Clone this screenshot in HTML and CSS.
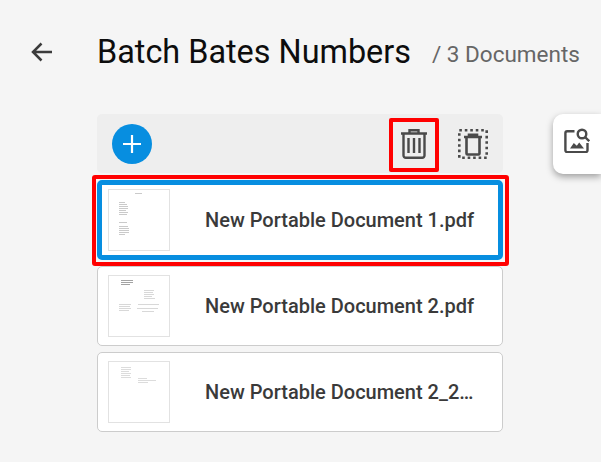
FILE: index.html
```html
<!DOCTYPE html>
<html lang="en">
<head>
<meta charset="utf-8">
<title>Batch Bates Numbers</title>
<link rel="stylesheet" href="styles.css">
</head>
<body>
<header class="header">
  <svg class="back" viewBox="0 0 22 20" width="22" height="20"><path d="M21 10H2M10.500 1.500 2 10l8.500 8.500" fill="none" stroke="#3c3c3c" stroke-width="2.500"/></svg>
  <h1 class="title">Batch Bates Numbers</h1>
  <span class="count">/ 3 Documents</span>
</header>
<main class="main">
  <section class="panel">
    <div class="toolbar">
      <button class="add" type="button" aria-label="Add">
        <svg viewBox="0 0 18 18" width="18" height="18"><path d="M9 0v18M0 9h18" stroke="#fff" stroke-width="2.200"/></svg>
      </button>
      <div class="tools">
        <div class="tool tool-marked">
          <svg viewBox="0 0 26 30" width="26" height="30" fill="none" stroke="#4a4a4a" stroke-width="2.400"><path d="M0 4.500h26M8.500 4.500V1.200h9v3.300"/><path d="M2.500 5v21.500a2.300 2.300 0 0 0 2.300 2.300h16.400a2.300 2.300 0 0 0 2.300-2.300V5"/><path d="M7.500 9v15M13 9v15M18.500 9v15"/></svg>
        </div>
        <div class="tool">
          <svg viewBox="0 0 30 30" width="30" height="30" fill="none" stroke="#4a4a4a"><rect x="1.300" y="1.300" width="27.400" height="27.400" stroke-width="2.600" stroke-dasharray="2.600 2.880"/><path stroke-width="2.600" d="M6 8h18M11 7.500V5.800h8v1.700M8.500 8v16.500a1 1 0 0 0 1 1h11a1 1 0 0 0 1-1V8"/></svg>
        </div>
      </div>
    </div>
    <ul class="docs">
      <li class="doc doc-active">
        <svg class="thumb" viewBox="0 0 60 60"><g fill="#b4b4b4"><rect x="26" y="3" width="7" height=".7"/><rect x="10" y="12" width="6" height=".7"/><rect x="10" y="14" width="8" height=".7"/><rect x="10" y="16" width="9" height=".7"/><rect x="10" y="18" width="9" height=".7"/><rect x="10" y="20" width="7" height=".7"/><rect x="10" y="22" width="9" height=".7"/><rect x="10" y="24" width="8" height=".7"/><rect x="10" y="32" width="8" height=".7"/><rect x="10" y="36" width="9" height=".7"/><rect x="10" y="38" width="10" height=".7"/><rect x="10" y="40" width="10" height=".7"/><rect x="10" y="42" width="10" height=".7"/><rect x="10" y="44" width="6" height=".7"/></g></svg>
        <span class="name">New Portable Document 1.pdf</span>
      </li>
      <li class="doc">
        <svg class="thumb" viewBox="0 0 60 60"><g fill="#8c8c8c"><rect x="12" y="4" width="12" height=".8"/><rect x="12" y="6" width="12" height=".8"/><rect x="12" y="8" width="9" height=".8"/></g><g fill="#c8c8c8"><rect x="35" y="14" width="10" height=".7"/><rect x="35" y="16" width="9" height=".7"/><rect x="35" y="18" width="10" height=".7"/><rect x="35" y="20" width="8" height=".7"/><rect x="35" y="22" width="11" height=".7"/><rect x="10" y="28" width="12" height=".7"/><rect x="10" y="30" width="11" height=".7"/><rect x="10" y="32" width="12" height=".7"/><rect x="10" y="34" width="10" height=".7"/><rect x="29" y="28" width="21" height=".7"/><rect x="28" y="32" width="21" height=".7"/><rect x="33" y="35" width="12" height=".7"/></g></svg>
        <span class="name">New Portable Document 2.pdf</span>
      </li>
      <li class="doc">
        <svg class="thumb" viewBox="0 0 60 60"><g fill="#d4d4d4"><rect x="12" y="5" width="10" height=".8"/><rect x="12" y="7" width="10" height=".8"/><rect x="12" y="9" width="8" height=".8"/><rect x="12" y="11" width="10" height=".8"/><rect x="12" y="13" width="9" height=".8"/><rect x="12" y="15" width="10" height=".8"/><rect x="29" y="16" width="9" height=".8"/><rect x="29" y="18" width="18" height=".8"/><rect x="29" y="20" width="10" height=".8"/></g></svg>
        <span class="name">New Portable Document 2_2…</span>
      </li>
    </ul>
  </section>
  <aside class="side-tab">
    <svg viewBox="0 0 26 25" width="26" height="25" fill="none" stroke="#4a4a4a" stroke-width="2.400"><path d="M10.500 3.200H3.200a1.800 1.800 0 0 0-1.800 1.800v17.300a1.800 1.800 0 0 0 1.800 1.800h18.500a1.800 1.800 0 0 0 1.800-1.800V15"/><circle cx="18" cy="6" r="4.300"/><path d="M21 9l4.200 4.200"/><path fill="#4a4a4a" stroke="none" d="M6 20.500l3.800-5.500 3 2.800 2.400-3.300 4.800 6z"/></svg>
  </aside>
</main>
</body>
</html>
```
FILE: styles.css
```css
html, body {
  margin: 0;
  padding: 0;
}
body {
  width: 601px;
  height: 462px;
  overflow: hidden;
  background: #f5f5f5;
  font-family: Roboto, "Liberation Sans", sans-serif;
}
.header {
  display: flex;
  align-items: center;
  height: 52px;
  padding: 26px 0 0 31px;
}
.back {
  flex: none;
  margin-right: 44px;
}
.title {
  margin: 0;
  font-size: 32.400px;
  font-weight: 400;
  color: #0d0d0d;
  white-space: nowrap;
}
.count {
  margin-left: 21px;
  font-size: 22.500px;
  color: #666;
  white-space: nowrap;
  padding-top: 4px;
}
.main {
  display: flex;
  align-items: flex-start;
  padding: 36px 0 0 97px;
}
.panel {
  flex: none;
  width: 406px;
}
.toolbar {
  display: flex;
  align-items: center;
  justify-content: space-between;
  height: 59px;
  padding: 0 15px 0 15px;
  box-sizing: border-box;
  background: #eeeeee;
  border-radius: 5px;
}
.add {
  display: flex;
  align-items: center;
  justify-content: center;
  width: 40px;
  height: 40px;
  margin-top: 1px;
  padding: 0;
  border: 0;
  border-radius: 50%;
  background: #078ee0;
}
.tools {
  display: flex;
  align-items: center;
  gap: 29px;
}
.tool {
  display: flex;
  align-items: center;
  justify-content: center;
  width: 30px;
  height: 30px;
}
.tool-marked {
  position: relative;
}
.tool-marked::after {
  content: "";
  position: absolute;
  left: -10px;
  top: -11px;
  width: 50px;
  height: 54px;
  box-sizing: border-box;
  border: 4px solid #ff0000;
  border-radius: 2px;
}
.docs {
  display: flex;
  flex-direction: column;
  gap: 6px;
  margin: 7px 0 0;
  padding: 0;
  list-style: none;
}
.doc {
  position: relative;
  display: flex;
  align-items: center;
  height: 80px;
  padding-left: 10px;
  box-sizing: border-box;
  background: #fff;
  border: 1px solid #cccccc;
  border-radius: 5px;
}
.doc-active {
  padding-left: 6px;
  border: 5px solid #078ee0;
}
.doc-active::after {
  content: "";
  position: absolute;
  left: -10px;
  top: -10px;
  right: -11px;
  bottom: -11px;
  border: 4px solid #ff0000;
  border-radius: 3px;
}
.thumb {
  flex: none;
  width: 60px;
  height: 60px;
  background: #fff;
  border: 1px solid #e2e2e2;
}
.name {
  margin-left: 35px;
  font-size: 20px;
  font-weight: 500;
  color: #3a3a3a;
  white-space: nowrap;
}
.side-tab {
  flex: none;
  display: flex;
  align-items: center;
  justify-content: center;
  width: 48px;
  height: 60px;
  margin-left: 50px;
  padding-bottom: 7px;
  box-sizing: border-box;
  background: #fff;
  border-radius: 10px 0 0 10px;
  box-shadow: 0 3px 7px rgba(0, 0, 0, .35);
}
```
